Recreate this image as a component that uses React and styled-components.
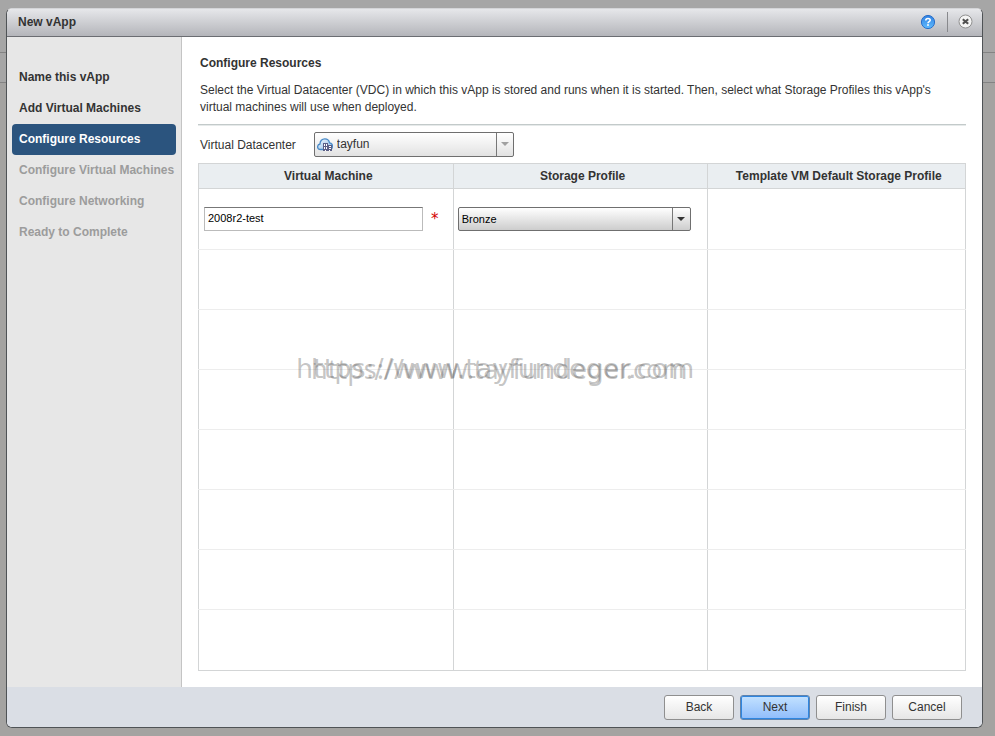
import React, { useState } from "react";
import styled, { createGlobalStyle } from "styled-components";

const steps = [
    { label: "Name this vApp", state: "done" },
    { label: "Add Virtual Machines", state: "done" },
    { label: "Configure Resources", state: "active" },
    { label: "Configure Virtual Machines", state: "pending" },
    { label: "Configure Networking", state: "pending" },
    { label: "Ready to Complete", state: "pending" },
];

const emptyRows = [1, 2, 3, 4, 5, 6, 7];

function HelpIcon() {
    return (
        <svg width="16" height="16" viewBox="0 0 16 16" aria-hidden="true">
            <defs>
                <linearGradient id="help" x1="0" y1="0" x2="0" y2="1">
                    <stop offset="0" stopColor="#2f7fe0" />
                    <stop offset="1" stopColor="#62bdff" />
                </linearGradient>
            </defs>
            <circle cx="8" cy="8" r="6.6" fill="url(#help)" stroke="#2b6fc9" />
            <path d="M5.8 6.4C5.8 3.9 10.2 3.9 10.2 6.2C10.2 7.6 8 7.6 8 9.2" fill="none" stroke="#fff" strokeWidth="1.6" />
            <rect x="7.1" y="10.2" width="1.8" height="1.6" fill="#fff" />
        </svg>
    );
}

function CloseIcon() {
    return (
        <svg width="16" height="16" viewBox="0 0 16 16" aria-hidden="true">
            <circle cx="7.5" cy="7.5" r="6.5" fill="#f4f4f4" stroke="#909090" />
            <path d="M4.8 5.2L10.2 9.8M10.2 5.2L4.8 9.8" stroke="#505050" strokeWidth="2.1" />
        </svg>
    );
}

function CloudIcon() {
    return (
        <svg width="16" height="14" viewBox="0 0 16 14" aria-hidden="true">
            <defs>
                <linearGradient id="cloud" x1="0" y1="0" x2="1" y2="1">
                    <stop offset="0" stopColor="#f4f9fe" />
                    <stop offset="1" stopColor="#8dbbe6" />
                </linearGradient>
            </defs>
            <path
                d="M3.6 11.5C1.7 11.5 0.6 10.3 0.6 8.9C0.6 7.4 1.7 6.2 3 6C3 3 5 0.8 7.8 0.8C10.3 0.8 12.1 2.3 12.5 4.8C14.2 5 15.4 6.3 15.4 8C15.4 10 14 11.5 12.3 11.5Z"
                fill="url(#cloud)"
                stroke="#4a8bc8"
                strokeWidth="1.3"
            />
            <path d="M6 5H11V7H15V13H6Z" fill="#5b5f86" />
            <path d="M7 6h1v2H7zM9 6h1v2H9zM7 9h1v2H7zM9 9h1v2H9zM12 8h2v1h-2zM12 10h2v1h-2zM8 12h1v1H8zM12 12h1v1h-1z" fill="#fff" />
        </svg>
    );
}

function App() {
    const [vmName, setVmName] = useState("2008r2-test");

    return (
        <Page>
            <GlobalStyle />
            <Dialog role="dialog" aria-labelledby="dialog-title">
                <TitleBar>
                    <h1 id="dialog-title">New vApp</h1>
                    <IconButton type="button" aria-label="Help"><HelpIcon /></IconButton>
                    <Divider />
                    <IconButton type="button" aria-label="Close"><CloseIcon /></IconButton>
                </TitleBar>
                <Body>
                    <Sidebar>
                        {steps.map((step) => (
                            <Step key={step.label} $state={step.state}>{step.label}</Step>
                        ))}
                    </Sidebar>
                    <Content>
                        <Intro>
                            <h2>Configure Resources</h2>
                            <p>
                                Select the Virtual Datacenter (VDC) in which this vApp is stored and runs when it is
                                started. Then, select what Storage Profiles this vApp's virtual machines will use when
                                deployed.
                            </p>
                        </Intro>
                        <Field>
                            <label htmlFor="vdc">Virtual Datacenter</label>
                            <SelectBox $width="200px" $muted>
                                <Badge><CloudIcon /></Badge>
                                <select id="vdc" defaultValue="tayfun">
                                    <option>tayfun</option>
                                </select>
                            </SelectBox>
                        </Field>
                        <TableArea>
                            <Table>
                                <colgroup>
                                    <col width="33.2%" />
                                    <col width="33.1%" />
                                    <col />
                                </colgroup>
                                <thead>
                                    <tr>
                                        <th>Virtual Machine</th>
                                        <th>Storage Profile</th>
                                        <th>Template VM Default Storage Profile</th>
                                    </tr>
                                </thead>
                                <tbody>
                                    <tr>
                                        <td>
                                            <NameCell>
                                                <input
                                                    aria-label="Virtual machine name"
                                                    value={vmName}
                                                    onChange={(e) => setVmName(e.target.value)}
                                                />
                                                <Required>*</Required>
                                            </NameCell>
                                        </td>
                                        <td>
                                            <SelectBox $width="233px" $small>
                                                <select aria-label="Storage profile" defaultValue="Bronze">
                                                    <option>Bronze</option>
                                                </select>
                                            </SelectBox>
                                        </td>
                                        <td />
                                    </tr>
                                    {emptyRows.map((row) => (
                                        <tr key={row}>
                                            <td />
                                            <td />
                                            <td />
                                        </tr>
                                    ))}
                                </tbody>
                            </Table>
                            <Watermark $left="98px" $font='"DejaVu Sans"'>https://www.tayfundeger.com</Watermark>
                            <Watermark $left="113px" $font='"Noto Sans"'>https://www.tayfundeger.com</Watermark>
                        </TableArea>
                    </Content>
                </Body>
                <Footer>
                    <Button type="button">Back</Button>
                    <Button type="button" $primary>Next</Button>
                    <Button type="button">Finish</Button>
                    <Button type="button">Cancel</Button>
                </Footer>
            </Dialog>
        </Page>
    );
}

const GlobalStyle = createGlobalStyle`
    * {
        box-sizing: border-box;
    }
    body {
        margin: 0;
        background: #a4a3a1;
        color: #333;
        font-family: "Liberation Sans", Arial, sans-serif;
        font-size: 12px;
        line-height: 17px;
    }
    h1, h2, p {
        margin: 0;
        font-size: inherit;
    }
    button, input, select {
        font: inherit;
        color: inherit;
    }
`;

/* the two lines are the dimmed window behind the dialog */
const Page = styled.div`
    min-height: 100vh;
    padding: 8px 12px 8px 6px;
    background: linear-gradient(
        #a6a6a6 52px, #838383 52px, #838383 53px,
        #a6a6a6 53px, #a6a6a6 82px, #838383 82px, #838383 83px,
        #a4a3a1 83px
    );
`;

const Dialog = styled.div`
    border: 1px solid #4f5356;
    border-top-color: #d4d5d8;
    border-radius: 6px;
    overflow: hidden;
    background: #fff;
`;

const TitleBar = styled.header`
    display: flex;
    align-items: center;
    height: 28px;
    padding: 0 8px 1px 11px;
    border-bottom: 1px solid #6b6d72;
    background: linear-gradient(#e6e7ea, #b4b5ba);

    h1 {
        flex: 1;
    }
`;

const IconButton = styled.button`
    display: flex;
    padding: 0;
    border: 0;
    background: none;
`;

const Divider = styled.span`
    width: 1px;
    height: 20px;
    margin: 0 10px 0 11px;
    background: #88898d;
`;

const Body = styled.div`
    display: flex;
`;

const Sidebar = styled.ol`
    flex: none;
    width: 175px;
    margin: 0;
    padding: 25px 5px;
    border-right: 1px solid #c4c4c4;
    background: #e7e7e7;
    list-style: none;
`;

const stepColors = { done: "#333", active: "#fff", pending: "#9c9c9c" };

const Step = styled.li`
    height: 31px;
    padding: 0 7px;
    border-radius: 4px;
    background: ${(p) => (p.$state === "active" ? "#2b547e" : "none")};
    color: ${(p) => stepColors[p.$state]};
    font-weight: bold;
    line-height: 30px;
    white-space: nowrap;
`;

const Content = styled.main`
    flex: 1;
    min-width: 0;
    padding: 18px 16px 16px;
`;

const Intro = styled.div`
    padding: 0 2px 8px;
    border-bottom: 1px solid #c3caca;
    box-shadow: 0 1px #e6eaea;

    p {
        margin-top: 10px;
    }
`;

const Field = styled.div`
    display: flex;
    align-items: center;
    gap: 18px;
    padding: 7px 2px 6px;

    label {
        padding-top: 1px;
    }
`;

const SelectBox = styled.div`
    position: relative;
    width: ${(p) => p.$width};
    color: ${(p) => (p.$small ? "#000" : "#333")};
    font-size: ${(p) => (p.$small ? "11px" : "12px")};

    select {
        display: block;
        width: 100%;
        height: ${(p) => (p.$small ? "24px" : "25px")};
        padding: 0 20px 0 ${(p) => (p.$small ? "3px" : "22px")};
        appearance: none;
        border: 1px solid #6f6f6f;
        border-radius: 2px;
        background: linear-gradient(#fff, ${(p) => (p.$small ? "#cdcdcd" : "#e2e2e2")});
    }
    &::before {
        content: "";
        position: absolute;
        top: 1px;
        right: ${(p) => (p.$muted ? "17px" : "18px")};
        bottom: 1px;
        width: 1px;
        background: #777;
    }
    &::after {
        content: "";
        position: absolute;
        top: 10px;
        right: ${(p) => (p.$muted ? "5px" : "6px")};
        border: 4px solid transparent;
        border-top-color: ${(p) => (p.$muted ? "#a0a0a0" : "#333")};
        border-bottom: 0;
    }
`;

const Badge = styled.span`
    position: absolute;
    top: 6px;
    left: 3px;
    display: flex;
    pointer-events: none;
`;

const TableArea = styled.div`
    position: relative;
`;

const Table = styled.table`
    width: 100%;
    table-layout: fixed;
    border-collapse: collapse;
    border: 1px solid #d3d5d6;

    th {
        height: 25px;
        padding: 0 0 0 5px;
        border: 1px solid #d3d5d6;
        background: #eaeef1;
    }
    td {
        height: 60px;
        padding: 0 4px;
        border: 1px solid #d3d5d6;
        border-top-color: #ededed;
        border-bottom-color: #ededed;
    }
    tbody tr:first-child td,
    tbody tr:last-child td {
        height: 61px;
    }
    tbody tr:last-child td {
        border-bottom-color: #d3d5d6;
    }
`;

const NameCell = styled.div`
    display: flex;
    align-items: center;
    gap: 8px;
    padding-left: 1px;

    input {
        width: 219px;
        height: 24px;
        padding: 0 3px 2px;
        border: 1px solid #bbb;
        border-top-color: #777;
        background: #fff;
        color: #000;
        font-size: 11px;
    }
`;

const Required = styled.span`
    color: #d40000;
    font-family: "DejaVu Sans", sans-serif;
    font-size: 15px;
    line-height: 17px;
`;

const Watermark = styled.span`
    position: absolute;
    top: 189px;
    left: ${(p) => p.$left};
    color: rgba(90, 90, 90, 0.36);
    font-family: ${(p) => p.$font}, sans-serif;
    font-size: 27px;
    line-height: 34px;
    pointer-events: none;
`;

const Footer = styled.footer`
    display: flex;
    justify-content: flex-end;
    gap: 6px;
    padding: 8px 20px 7px;
    background: #dadee5;
`;

const Button = styled.button`
    width: 70px;
    height: 25px;
    padding: 0;
    border: 1px solid #8f8f8f;
    border-radius: 3px;
    background: linear-gradient(#fff, #e6e6e6);

    ${(p) => p.$primary && `
        border-color: #5f83ad;
        background: linear-gradient(#c3e2ff, #8fbcfb);
        box-shadow: inset 0 0 0 1px #2f86e0;
    `}
`;

export default App;
